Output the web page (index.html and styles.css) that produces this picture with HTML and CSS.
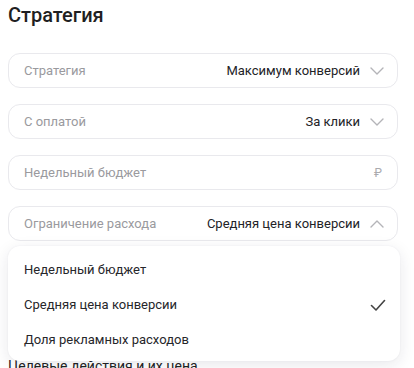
FILE: index.html
```html
<!DOCTYPE html>
<html lang="ru">
<head>
<meta charset="utf-8">
<link rel="stylesheet" href="styles.css">
</head>
<body>
<div class="page">
  <h1 class="title">Стратегия</h1>
  <div class="fields">
    <div class="field">
      <span class="label">Стратегия</span>
      <span class="value">Максимум конверсий</span>
      <svg class="chev" viewBox="0 0 14 8" width="14" height="8"><path d="M1 1l6 6 6-6" fill="none" stroke="#b4b4b8" stroke-width="1.4" stroke-linecap="round" stroke-linejoin="round"/></svg>
    </div>
    <div class="field">
      <span class="label">С оплатой</span>
      <span class="value">За клики</span>
      <svg class="chev" viewBox="0 0 14 8" width="14" height="8"><path d="M1 1l6 6 6-6" fill="none" stroke="#b4b4b8" stroke-width="1.4" stroke-linecap="round" stroke-linejoin="round"/></svg>
    </div>
    <div class="field">
      <span class="label">Недельный бюджет</span>
      <span class="ruble">₽</span>
    </div>
    <div class="select-wrap">
      <div class="field">
        <span class="label">Ограничение расхода</span>
        <span class="value">Средняя цена конверсии</span>
        <svg class="chev" viewBox="0 0 14 8" width="14" height="8"><path d="M1 7l6-6 6 6" fill="none" stroke="#b4b4b8" stroke-width="1.4" stroke-linecap="round" stroke-linejoin="round"/></svg>
      </div>
      <div class="menu">
        <div class="item">Недельный бюджет</div>
        <div class="item">Средняя цена конверсии
          <svg class="check" viewBox="0 0 16 12" width="16" height="12"><path d="M1.5 6.5l4.5 4.5 8.5-9.5" fill="none" stroke="#444" stroke-width="1.6" stroke-linecap="round" stroke-linejoin="round"/></svg>
        </div>
        <div class="item">Доля рекламных расходов</div>
      </div>
    </div>
  </div>
  <h2 class="section">Целевые действия и их цена</h2>
</div>
</body>
</html>
```
FILE: styles.css
```css
html, body {
  margin: 0;
  padding: 0;
  background: #ffffff;
}
body {
  font-family: Roboto, "Noto Sans", sans-serif;
  color: #222222;
  height: 368px;
  overflow: hidden;
}
.page {
  padding: 0 16px 0 8px;
}
.title {
  margin: 0;
  padding-top: 2px;
  font-size: 20px;
  line-height: 26px;
  font-weight: 500;
  color: #1f1f22;
}
.fields {
  margin-top: 25px;
  display: flex;
  flex-direction: column;
  gap: 16px;
}
.field {
  height: 35px;
  box-sizing: border-box;
  border: 1px solid #e9e9ed;
  border-radius: 12px;
  display: flex;
  align-items: center;
  padding: 0 13px 0 15px;
  font-size: 13px;
  background: #fff;
}
.select-wrap {
  position: relative;
}
.label {
  color: #9a9a9e;
  flex: 1;
}
.value {
  color: #222226;
}
.chev {
  margin-left: 10px;
}
.ruble {
  color: #aaaaae;
  font-size: 12px;
  margin-right: 2px;
}
.menu {
  position: absolute;
  left: 0;
  right: -2px;
  top: 40px;
  background: #fff;
  border-radius: 12px;
  box-shadow: 0 4px 16px rgba(30, 30, 60, 0.1), 0 0 2px rgba(30, 30, 60, 0.06);
  padding: 6px 0 4px;
  z-index: 2;
}
.item {
  height: 35px;
  display: flex;
  align-items: center;
  justify-content: space-between;
  padding: 0 14px 0 16px;
  font-size: 13px;
  color: #26262a;
}
.section {
  margin: 116px 0 0 0;
  font-size: 14px;
  font-weight: 400;
  line-height: 18px;
  color: #222;
}
```
